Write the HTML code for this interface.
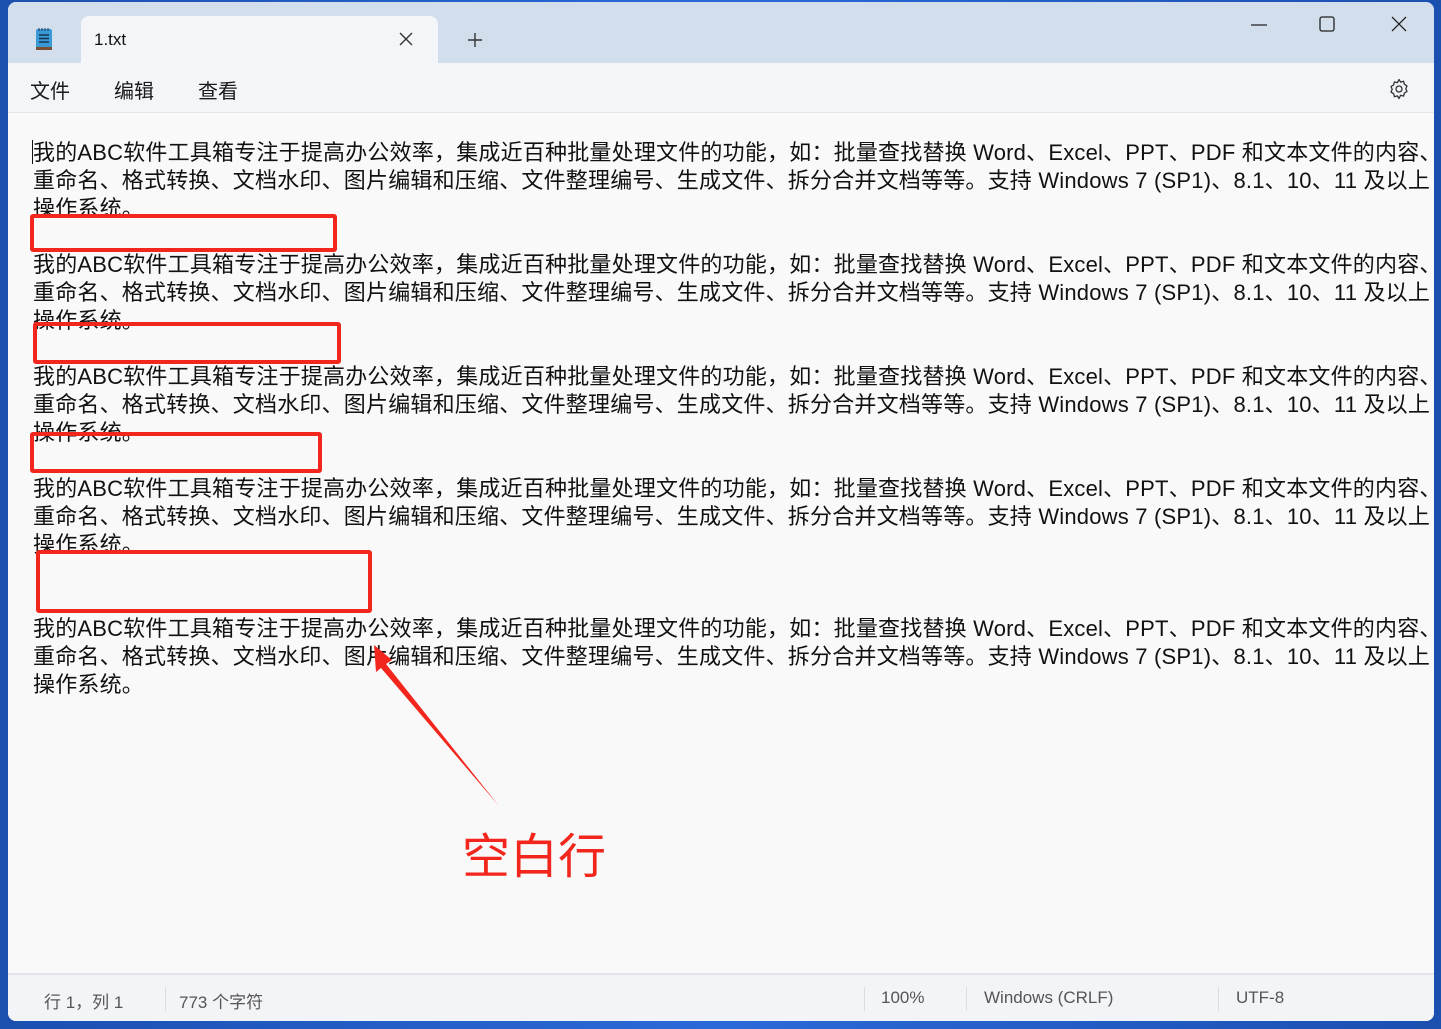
<!DOCTYPE html>
<html><head><meta charset="utf-8"><style>
*{margin:0;padding:0;box-sizing:border-box}
html,body{width:1441px;height:1029px;overflow:hidden}
body{background:linear-gradient(90deg,#1b4fb0,#2a6ad8 50%,#1b4fb0);position:relative;font-family:"Liberation Sans","Noto Sans CJK SC",sans-serif}
#win{position:absolute;left:8px;top:2px;width:1426px;height:1019px;background:#f9f9f9;border-radius:8px;overflow:hidden}
#title{position:absolute;left:0;top:0;width:100%;height:61px;background:#d3deed}
#tab{position:absolute;left:73px;top:14px;width:357px;height:49px;background:#f3f5f9;border-radius:8px 8px 0 0}
#menu{position:absolute;left:0;top:61px;width:100%;height:50px;background:#f3f5f9;border-bottom:1px solid #e3e5e9}
.m{position:absolute;top:73px;font-size:20px;color:#1a1a1a}
#text{position:absolute;left:25px;top:137px;font-size:22px;line-height:28px;color:#111;white-space:pre;letter-spacing:0.2px}
#status{position:absolute;left:0;top:971px;width:100%;height:48px;background:#f3f4f8;border-top:2px solid #e3e5ea;font-size:17px;color:#555}
.s{position:absolute;top:13px}
.sep{position:absolute;top:12px;width:1px;height:24px;background:#dcdde0}
.box{position:absolute;border:4px solid #f2261c;border-radius:3px}
</style></head><body>
<div id="win">
<div id="title"></div>
<div id="tab"></div>
<svg style="position:absolute;left:26px;top:24px" width="22" height="28" viewBox="0 0 22 28"><rect x="2" y="3" width="16" height="20" rx="2" fill="#3a9ad8"/><rect x="2" y="21" width="16" height="3" fill="#7a5030"/><g stroke="#15354f" stroke-width="1.5"><line x1="5" y1="9" x2="15" y2="9"/><line x1="5" y1="12.5" x2="15" y2="12.5"/><line x1="5" y1="16" x2="15" y2="16"/></g><g stroke="#15354f" stroke-width="1"><line x1="5" y1="2" x2="5" y2="5"/><line x1="8" y1="2" x2="8" y2="5"/><line x1="11" y1="2" x2="11" y2="5"/><line x1="14" y1="2" x2="14" y2="5"/></g></svg>
<div style="position:absolute;left:86px;top:28px;font-size:17px;color:#111">1.txt</div>
<svg style="position:absolute;left:391px;top:30px" width="14" height="14"><path d="M1 1L13 13M13 1L1 13" stroke="#333" stroke-width="1.4"/></svg>
<svg style="position:absolute;left:459px;top:30px" width="16" height="16"><path d="M8 1V15M1 8H15" stroke="#333" stroke-width="1.4"/></svg>
<svg style="position:absolute;left:1243px;top:21px" width="16" height="4"><path d="M0 2H16" stroke="#222" stroke-width="1.2"/></svg>
<svg style="position:absolute;left:1311px;top:14px" width="16" height="16"><rect x="1" y="1" width="14" height="14" rx="2" fill="none" stroke="#222" stroke-width="1.3"/></svg>
<svg style="position:absolute;left:1383px;top:14px" width="16" height="16"><path d="M1 1L15 15M15 1L1 15" stroke="#222" stroke-width="1.3"/></svg>
<div id="menu"></div>
<div class="m" style="left:22px">文件</div>
<div class="m" style="left:106px">编辑</div>
<div class="m" style="left:190px">查看</div>
<svg style="position:absolute;left:1379px;top:75px" width="24" height="24" viewBox="0 0 24 24"><path d="M12 2.5l1.6 2.6 3-.8.8 3 2.6 1.6-1.2 2.8 1.2 2.8-2.6 1.6-.8 3-3-.8L12 21.5l-1.6-2.6-3 .8-.8-3L4 15.1l1.2-2.8L4 9.5l2.6-1.6.8-3 3 .8z" fill="none" stroke="#333" stroke-width="1.3" stroke-linejoin="round"/><circle cx="12" cy="12" r="3" fill="none" stroke="#333" stroke-width="1.3"/></svg>
<div style="position:absolute;left:24px;top:138px;width:1px;height:24px;background:#111"></div>
<div id="text">我的ABC软件工具箱专注于提高办公效率，集成近百种批量处理文件的功能，如：批量查找替换 Word、Excel、PPT、PDF 和文本文件的内容、
重命名、格式转换、文档水印、图片编辑和压缩、文件整理编号、生成文件、拆分合并文档等等。支持 Windows 7 (SP1)、8.1、10、11 及以上
操作系统。

我的ABC软件工具箱专注于提高办公效率，集成近百种批量处理文件的功能，如：批量查找替换 Word、Excel、PPT、PDF 和文本文件的内容、
重命名、格式转换、文档水印、图片编辑和压缩、文件整理编号、生成文件、拆分合并文档等等。支持 Windows 7 (SP1)、8.1、10、11 及以上
操作系统。

我的ABC软件工具箱专注于提高办公效率，集成近百种批量处理文件的功能，如：批量查找替换 Word、Excel、PPT、PDF 和文本文件的内容、
重命名、格式转换、文档水印、图片编辑和压缩、文件整理编号、生成文件、拆分合并文档等等。支持 Windows 7 (SP1)、8.1、10、11 及以上
操作系统。

我的ABC软件工具箱专注于提高办公效率，集成近百种批量处理文件的功能，如：批量查找替换 Word、Excel、PPT、PDF 和文本文件的内容、
重命名、格式转换、文档水印、图片编辑和压缩、文件整理编号、生成文件、拆分合并文档等等。支持 Windows 7 (SP1)、8.1、10、11 及以上
操作系统。


我的ABC软件工具箱专注于提高办公效率，集成近百种批量处理文件的功能，如：批量查找替换 Word、Excel、PPT、PDF 和文本文件的内容、
重命名、格式转换、文档水印、图片编辑和压缩、文件整理编号、生成文件、拆分合并文档等等。支持 Windows 7 (SP1)、8.1、10、11 及以上
操作系统。</div>
<div id="status">
<div class="s" style="left:36px">行 1，列 1</div>
<div class="sep" style="left:157px"></div>
<div class="s" style="left:171px">773 个字符</div>
<div class="sep" style="left:856px"></div>
<div class="s" style="left:873px">100%</div>
<div class="sep" style="left:958px"></div>
<div class="s" style="left:976px">Windows (CRLF)</div>
<div class="sep" style="left:1210px"></div>
<div class="s" style="left:1228px">UTF-8</div>
</div>
</div>
<div class="box" style="left:30px;top:214px;width:307px;height:38px"></div>
<div class="box" style="left:33px;top:322px;width:308px;height:42px"></div>
<div class="box" style="left:30px;top:432px;width:292px;height:41px"></div>
<div class="box" style="left:36px;top:550px;width:336px;height:63px"></div>
<svg style="position:absolute;left:0;top:0" width="1441" height="1029"><polygon points="374,645 392,660 386,664 499,806 381,668 376,672" fill="#f2261c"/></svg>
<div style="position:absolute;left:462px;top:822px;font-size:48px;line-height:60px;color:#f2261c;font-family:'Noto Sans CJK SC',sans-serif">空白行</div>
</body></html>
